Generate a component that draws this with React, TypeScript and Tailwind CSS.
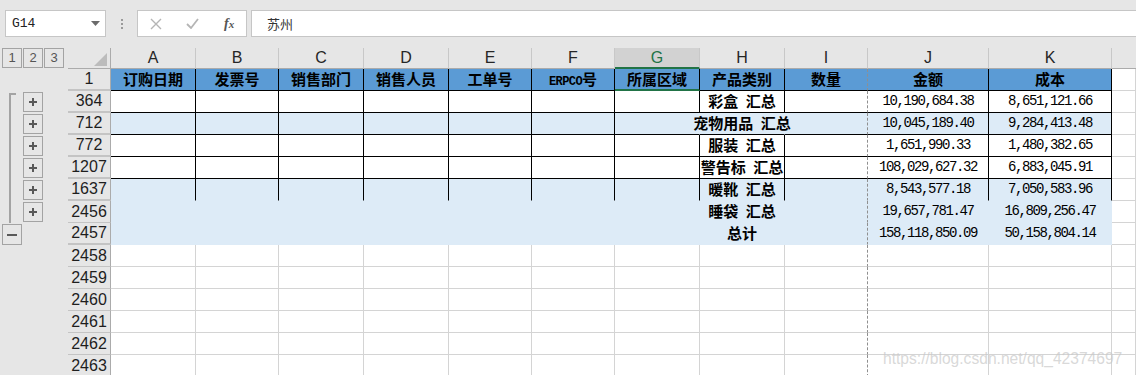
import clsx from "clsx";

const W = [
  "w-[85px]",
  "w-[83px]",
  "w-[85px]",
  "w-[85px]",
  "w-[83px]",
  "w-[83px]",
  "w-[85px]",
  "w-[85px]",
  "w-[83px]",
  "w-[121px]",
  "w-[123px]",
];

// border presets
const rB = "border-r-black";
const rG = "border-r-[#d4d4d4]";
const rN = "border-r-transparent";
const rD = "border-r-[#8f8f8f] [border-right-style:dashed]";
const bB = "border-b-black";
const bG = "border-b-[#d4d4d4]";
const bN = "border-b-transparent";

const BLUE = "bg-[#5b9bd5]";
const LIGHT = "bg-[#ddebf7]";
const WHITE = "bg-white";

const cjk = "font-['Noto_Sans_CJK_SC',sans-serif]";
const mono = "font-['Liberation_Mono',monospace]";

type C = { fill: string; r: string; b: string; text?: string; kind?: "hdr" | "sum" | "num"; extra?: string };

const Label = ({ text }: { text: string }) => {
  if (text.startsWith("ERPCO")) {
    return (
      <>
        <span className={`${mono} text-[12px] font-bold tracking-[-0.6px]`}>ERPCO</span>
        {text.slice(5)}
      </>
    );
  }
  return <>{text}</>;
};

const Cell = ({ w, c }: { w: string; c: C }) => (
  <div className={clsx("h-full shrink-0 border-r border-b flex items-center justify-center", w, c.fill, c.r, c.b, c.extra)}>
    {c.text && (
      <span
        className={clsx(
          "relative z-10 whitespace-nowrap text-black",
          c.kind === "hdr" && `${cjk} text-[15px] font-bold`,
          c.kind === "sum" && `${cjk} text-[15px] font-bold [word-spacing:4px]`,
          c.kind === "num" && `${mono} text-[14px] tracking-[-1.4px]`
        )}
      >
        <Label text={c.text} />
      </span>
    )}
  </div>
);

const headers = ["订购日期", "发票号", "销售部门", "销售人员", "工单号", "ERPCO号", "所属区域", "产品类别", "数量", "金额", "成本"];

const headerRow: C[] = headers.map((t, i) => ({
  fill: BLUE,
  r: i === 8 ? rD : rB,
  b: i === 6 ? "border-b-2 border-b-[#217346]" : bB,
  text: t,
  kind: "hdr",
}));

type Sum = { no: string; label: string; j: string; k: string; style: "white" | "pet" | "last" | "open" };

const sums: Sum[] = [
  { no: "364", label: "彩盒 汇总", j: "10,190,684.38", k: "8,651,121.66", style: "white" },
  { no: "712", label: "宠物用品 汇总", j: "10,045,189.40", k: "9,284,413.48", style: "pet" },
  { no: "772", label: "服装 汇总", j: "1,651,990.33", k: "1,480,382.65", style: "white" },
  { no: "1207", label: "警告标 汇总", j: "108,029,627.32", k: "6,883,045.91", style: "white" },
  { no: "1637", label: "暖靴 汇总", j: "8,543,577.18", k: "7,050,583.96", style: "last" },
  { no: "2456", label: "睡袋 汇总", j: "19,657,781.47", k: "16,809,256.47", style: "open" },
  { no: "2457", label: "总计", j: "158,118,850.09", k: "50,158,804.14", style: "open" },
];

function sumCells(s: Sum): C[] {
  const fill = s.style === "white" ? WHITE : LIGHT;
  const b = s.style === "white" || s.style === "pet" ? bB : bN;
  const open = s.style === "open";
  const cells: C[] = [];
  for (let i = 0; i < 6; i++) cells.push({ fill, r: open ? rN : rB, b });
  cells.push({ fill, r: open || s.style === "pet" ? rN : rB, b });
  cells.push({ fill, r: open || s.style === "pet" ? rN : rB, b, text: s.label, kind: "sum" });
  cells.push({ fill, r: rD, b });
  cells.push({ fill, r: open ? rN : rB, b, text: s.j, kind: "num" });
  cells.push({ fill, r: open ? rN : rB, b, text: s.k, kind: "num" });
  return cells;
}

const emptyCells = (): C[] => W.map((_, i) => ({ fill: WHITE, r: i === 8 ? rD : rG, b: bG }));

const RowHead = ({ n, thin }: { n: string; thin?: boolean }) => (
  <div
    className={clsx(
      "w-[43px] h-full shrink-0 bg-[#e6e6e6] border-r border-r-[#ababab] flex items-center justify-center text-[16px] text-[#1e1e1e] font-['Liberation_Sans',sans-serif]",
      thin ? "border-b border-b-[#c4c4c4]" : "border-b-2 border-b-[#c4c4c4]"
    )}
  >
    {n}
  </div>
);

const SheetRow = ({ n, cells, thin }: { n: string; cells: C[]; thin?: boolean }) => (
  <div className="flex h-[22px]">
    <RowHead n={n} thin={thin} />
    {cells.map((c, i) => (
      <Cell key={i} w={W[i]} c={c} />
    ))}
    <div className="flex-1 h-full bg-white border-r border-b border-r-[#d4d4d4] border-b-[#d4d4d4]" />
  </div>
);

const Plus = () => (
  <div className="w-[20px] h-[20px] border border-[#a3a3a3] flex items-center justify-center">
    <svg width="10" height="10" viewBox="0 0 10 10">
      <path d="M5 1v8M1 5h8" stroke="#595959" strokeWidth="2" />
    </svg>
  </div>
);

const App = () => {
  const letters = ["A", "B", "C", "D", "E", "F", "G", "H", "I", "J", "K"];
  return (
    <div className="relative w-[1136px] h-[375px] overflow-hidden bg-[#e6e6e6] font-['Liberation_Sans',sans-serif]">
      {/* formula bar */}
      <div className="h-[48px] flex items-start pt-[10px]">
        <div className="ml-[5px] w-[101px] h-[27px] bg-white border border-[#c6c6c6] flex items-center justify-between pl-[6px] pr-[5px]">
          <span className={`${mono} text-[13px] text-[#222]`}>G14</span>
          <svg width="9" height="5" viewBox="0 0 9 5">
            <path d="M0 0h9L4.5 5z" fill="#6b6b6b" />
          </svg>
        </div>
        <div className="ml-[15px] mt-[9px] flex flex-col gap-[2px]">
          <div className="w-[2px] h-[2px] bg-[#9a9a9a]" />
          <div className="w-[2px] h-[2px] bg-[#9a9a9a]" />
          <div className="w-[2px] h-[2px] bg-[#9a9a9a]" />
        </div>
        <div className="ml-[14px] w-[110px] h-[27px] bg-white border border-[#c6c6c6] flex items-center pl-[12px]">
          <svg width="12" height="12" viewBox="0 0 12 12">
            <path d="M1 1l10 10M11 1L1 11" stroke="#b5b5b5" strokeWidth="1.4" />
          </svg>
          <svg className="ml-[24px]" width="13" height="11" viewBox="0 0 13 11">
            <path d="M1 6l4 4 7-9" stroke="#b5b5b5" strokeWidth="1.8" fill="none" />
          </svg>
          <span className="ml-[25px] font-['Liberation_Serif',serif] italic font-bold text-[14px] text-[#555] leading-none">
            f<span className="text-[11px]">x</span>
          </span>
        </div>
        <div className="ml-[4px] flex-1 h-[27px] bg-white border border-r-0 border-[#c6c6c6] flex items-center pl-[15px]">
          <span className={`${cjk} text-[13px] text-[#333]`}>苏州</span>
        </div>
      </div>

      <div className="flex">
        {/* outline gutter */}
        <div className="w-[68px] shrink-0 flex flex-col">
          <div className="h-[21px] flex gap-[1px] pl-[2px]">
            {["1", "2", "3"].map((l) => (
              <div key={l} className="w-[20px] h-[20px] border border-[#a3a3a3] flex items-center justify-center text-[13px] text-[#555]">
                {l}
              </div>
            ))}
          </div>
          <div className="h-[22px]" />
          <div className="flex">
            <div className="w-[23px] flex flex-col">
              <div className="pl-[9px] pt-[2px]">
                <div className="h-[130px] w-[7px] border-l-2 border-t-2 border-[#a3a3a3]" />
              </div>
              <div className="pl-[2px] pt-[1px]">
                <div className="w-[20px] h-[21px] border border-[#a3a3a3] flex items-center justify-center">
                  <svg width="10" height="2" viewBox="0 0 10 2">
                    <path d="M0 1h10" stroke="#595959" strokeWidth="2" />
                  </svg>
                </div>
              </div>
            </div>
            <div className="flex flex-col">
              {[0, 1, 2, 3, 4, 5].map((i) => (
                <div key={i} className="h-[22px] pt-[1px]">
                  <Plus />
                </div>
              ))}
            </div>
          </div>
        </div>

        {/* sheet */}
        <div className="flex-1 flex flex-col">
          <div className="flex h-[21px]">
            <div className="w-[43px] shrink-0 border-r border-b border-[#ababab] flex items-end justify-end pr-[3px] pb-[2px]">
              <svg width="13" height="13" viewBox="0 0 13 13">
                <path d="M13 0v13H0z" fill="#bcbcbc" />
              </svg>
            </div>
            {letters.map((l, i) => (
              <div
                key={l}
                className={clsx(
                  "shrink-0 h-full border-r border-r-[#c8c8c8] flex items-center justify-center text-[16px]",
                  W[i],
                  l === "G" ? "bg-[#d2d2d2] text-[#217346] border-b-2 border-b-[#217346]" : "text-[#262626] border-b border-b-[#ababab]"
                )}
              >
                {l}
              </div>
            ))}
            <div className="flex-1 border-b border-b-[#ababab]" />
          </div>

          <SheetRow n="1" cells={headerRow} />
          {sums.map((s) => (
            <SheetRow key={s.no} n={s.no} cells={sumCells(s)} thin={s.no === "2456"} />
          ))}
          {["2458", "2459", "2460", "2461", "2462", "2463"].map((n) => (
            <SheetRow key={n} n={n} cells={emptyCells()} thin />
          ))}
        </div>
      </div>

      <div className="absolute left-[883px] top-[347px] text-[15.6px] text-[#c8c8c8]/70 whitespace-nowrap">
        https://blog.csdn.net/qq_42374697
      </div>
    </div>
  );
};

export default App;
